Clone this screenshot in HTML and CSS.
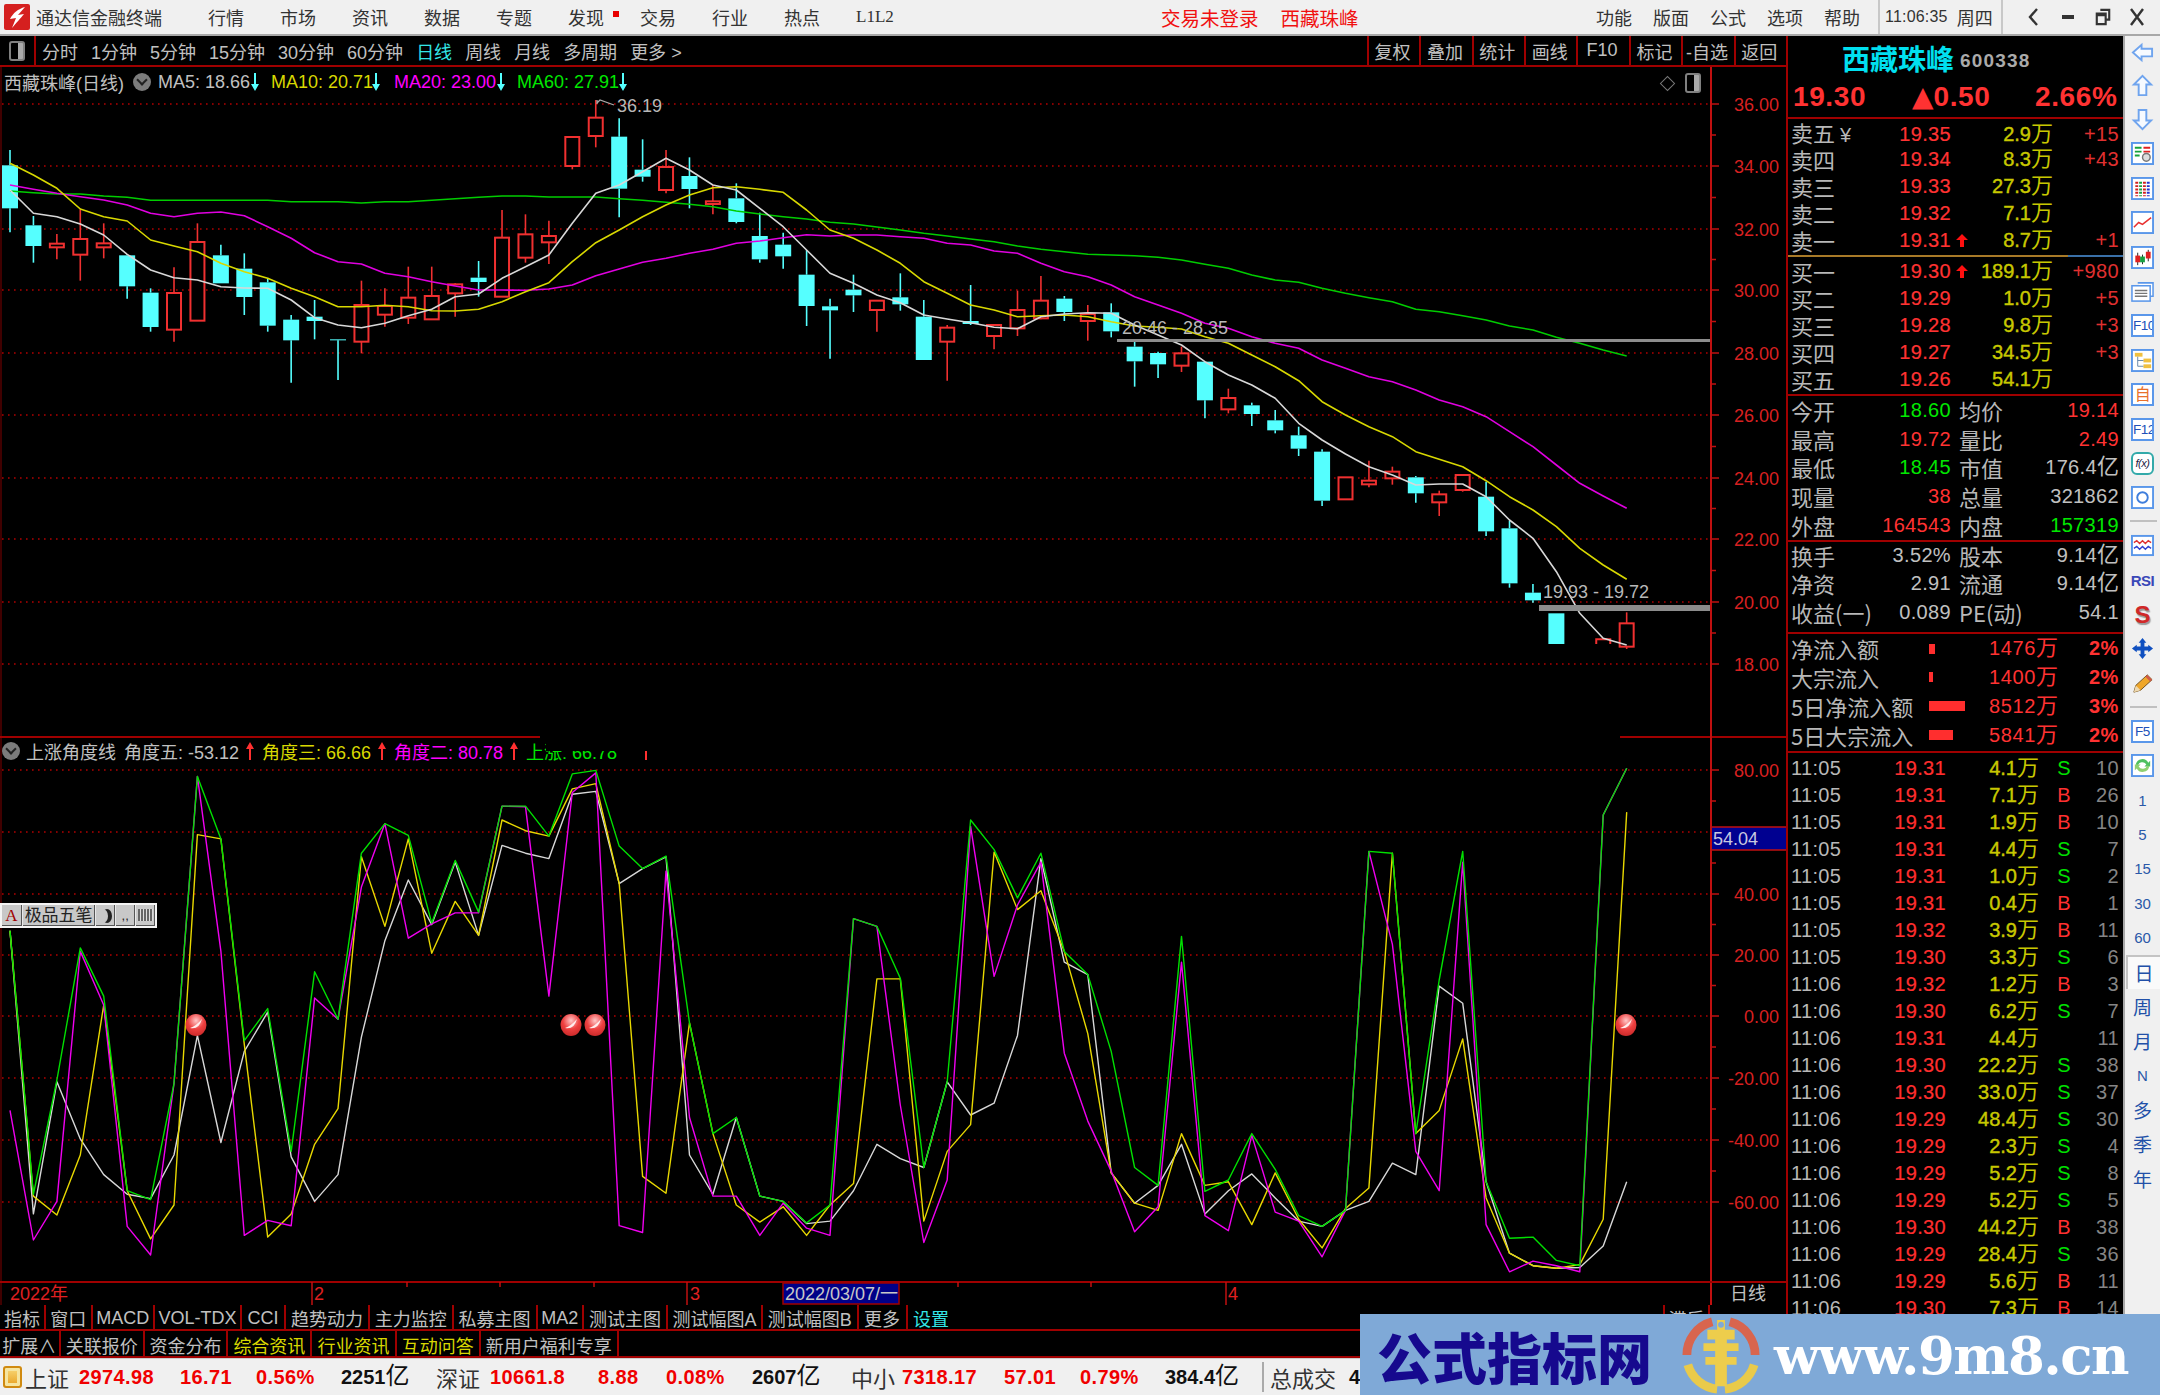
FILE: index.html
```html
<!DOCTYPE html>
<html lang="zh-CN">
<head>
<meta charset="utf-8">
<title>通达信金融终端</title>
<link rel="stylesheet" href="styles.css">
</head>
<body>
<div class="app">
  <header class="titlebar">
    <svg class="logo" viewBox="0 0 26 26"><rect width="26" height="26" rx="2" fill="#d5201f"/><path d="M21 3 C14 5 9 9 6 15 L12 14 L8 24 C13 18 16 15 20 10 L14 11 Z" fill="#fff"/></svg>
    <div class="brand">通达信金融终端</div>
    <nav class="menu">
      <span>行情</span><span>市场</span><span>资讯</span><span>数据</span><span>专题</span><span class="dotted">发现</span><span>交易</span><span>行业</span><span>热点</span><span class="l1">L1L2</span>
    </nav>
    <div class="alerts"><span>交易未登录</span><span>西藏珠峰</span></div>
    <nav class="funcs"><span>功能</span><span>版面</span><span>公式</span><span>选项</span><span>帮助</span></nav>
    <div class="clock"><span class="clock-t">11:06:35</span><span>周四</span></div>
    <div class="winbtns">
      <svg viewBox="0 0 16 20"><path d="M11 2 L4 10 L11 18" fill="none" stroke="#333" stroke-width="2.4"/></svg>
      <svg viewBox="0 0 16 20"><rect x="2" y="8" width="12" height="4" fill="#333"/></svg>
      <svg viewBox="0 0 18 20"><path d="M6 2 H16 V13 H13 M2 6 H12 V18 H2 Z M2 8 H12" fill="none" stroke="#333" stroke-width="2.4"/></svg>
      <svg viewBox="0 0 16 20"><path d="M2 2 L14 18 M14 2 L2 18" stroke="#333" stroke-width="2.4"/></svg>
    </div>
  </header>

  <div class="main">
    <section class="left">
      <div class="toolbar">
        <div class="tb-icon"><i class="pane-ico"></i></div>
        <div class="periods">
          <span>分时</span><span>1分钟</span><span>5分钟</span><span>15分钟</span><span>30分钟</span><span>60分钟</span><span class="cy">日线</span><span>周线</span><span>月线</span><span>多周期</span><span>更多 &gt;</span>
        </div>
        <div class="tools">
          <span>复权</span><span>叠加</span><span>统计</span><span>画线</span><span>F10</span><span>标记</span><span>-自选</span><span>返回</span>
        </div>
      </div>

      <div class="chart-wrap">
        <svg id="chart" class="chart" viewBox="0 67 1786 1238" width="1786" height="1238"></svg>

        <div class="legend lg-main">
          <span class="gr">西藏珠峰(日线)</span>
          <i class="chev"></i>
          <span class="gr">MA5: 18.66</span><i class="ar-down"></i>
          <span class="ye">MA10: 20.71</span><i class="ar-down"></i>
          <span class="ma">MA20: 23.00</span><i class="ar-down"></i>
          <span class="gn">MA60: 27.91</span><i class="ar-down"></i>
        </div>
        <div class="chart-tools"><i class="diamond"></i><i class="pane-ico"></i></div>

        <div class="legend lg-sub">
          <i class="chev"></i>
          <span class="gr">上涨角度线</span>
          <span class="gr">角度五: -53.12</span><i class="ar-up"></i>
          <span class="ye">角度三: 66.66</span><i class="ar-up"></i>
          <span class="ma">角度二: 80.78</span><i class="ar-up"></i>
          <span class="gn">上涨: 66.78</span><i class="ar-up"></i>
        </div>
        <div class="legend-mask"></div>

        <div class="ime">
          <span class="ime-a">A</span><span class="ime-name">极品五笔</span><span class="ime-b"><i class="moon"></i></span><span class="ime-b">,,</span>
          <span class="ime-b"><i class="kbd"></i></span>
        </div>
      </div>

      <div class="tabs tabs-a">
        <span>指标</span><span>窗口</span><span>MACD</span><span>VOL-TDX</span><span>CCI</span><span>趋势动力</span><span>主力监控</span><span>私募主图</span><span>MA2</span><span>测试主图</span><span>测试幅图A</span><span>测试幅图B</span><span>更多</span><span class="cy">设置</span>
        <span class="lag">滞后</span><span class="lag2"></span>
      </div>
      <div class="tabs tabs-b">
        <span>扩展∧</span><span>关联报价</span><span>资金分布</span><span class="ye">综合资讯</span><span class="ye">行业资讯</span><span class="ye">互动问答</span><span>新用户福利专享</span>
      </div>
    </section>

    <aside class="side">
      <div class="s-head">
        <div class="s-name"><b>西藏珠峰</b><span>600338</span></div>
        <div class="s-price"><span>19.30</span><span><em>▲</em>0.50</span><span>2.66%</span></div>
      </div>

      <div class="book sell">
        <div class="b-row"><span class="lb">卖五<em>¥</em></span><span class="pr">19.35</span><span></span><span class="vol">2.9<u>万</u></span><span class="dl">+15</span></div>
        <div class="b-row"><span class="lb">卖四</span><span class="pr">19.34</span><span></span><span class="vol">8.3<u>万</u></span><span class="dl">+43</span></div>
        <div class="b-row"><span class="lb">卖三</span><span class="pr">19.33</span><span></span><span class="vol">27.3<u>万</u></span><span class="dl"></span></div>
        <div class="b-row"><span class="lb">卖二</span><span class="pr">19.32</span><span></span><span class="vol">7.1<u>万</u></span><span class="dl"></span></div>
        <div class="b-row"><span class="lb">卖一</span><span class="pr">19.31</span><span><i class="up"></i></span><span class="vol">8.7<u>万</u></span><span class="dl">+1</span></div>
      </div>
      <div class="book-sep"><i></i></div>
      <div class="book buy">
        <div class="b-row"><span class="lb">买一</span><span class="pr">19.30</span><span><i class="up"></i></span><span class="vol">189.1<u>万</u></span><span class="dl">+980</span></div>
        <div class="b-row"><span class="lb">买二</span><span class="pr">19.29</span><span></span><span class="vol">1.0<u>万</u></span><span class="dl">+5</span></div>
        <div class="b-row"><span class="lb">买三</span><span class="pr">19.28</span><span></span><span class="vol">9.8<u>万</u></span><span class="dl">+3</span></div>
        <div class="b-row"><span class="lb">买四</span><span class="pr">19.27</span><span></span><span class="vol">34.5<u>万</u></span><span class="dl">+3</span></div>
        <div class="b-row"><span class="lb">买五</span><span class="pr">19.26</span><span></span><span class="vol">54.1<u>万</u></span><span class="dl"></span></div>
      </div>

      <div class="stats st-a">
        <div class="st-row"><span class="lb">今开</span><span class="val gn">18.60</span><span class="lb l2">均价</span><span class="val re">19.14</span></div>
        <div class="st-row"><span class="lb">最高</span><span class="val re">19.72</span><span class="lb l2">量比</span><span class="val re">2.49</span></div>
        <div class="st-row"><span class="lb">最低</span><span class="val gn">18.45</span><span class="lb l2">市值</span><span class="val gr">176.4<u>亿</u></span></div>
        <div class="st-row"><span class="lb">现量</span><span class="val re">38</span><span class="lb l2">总量</span><span class="val gr">321862</span></div>
        <div class="st-row"><span class="lb">外盘</span><span class="val re">164543</span><span class="lb l2">内盘</span><span class="val gn">157319</span></div>
      </div>
      <div class="stats st-b">
        <div class="st-row"><span class="lb">换手</span><span class="val gr">3.52%</span><span class="lb l2">股本</span><span class="val gr">9.14<u>亿</u></span></div>
        <div class="st-row"><span class="lb">净资</span><span class="val gr">2.91</span><span class="lb l2">流通</span><span class="val gr">9.14<u>亿</u></span></div>
        <div class="st-row"><span class="lb">收益(一)</span><span class="val gr">0.089</span><span class="lb l2">PE(动)</span><span class="val gr">54.1</span></div>
      </div>
      <div class="flows">
        <div class="fl-row"><span class="lb">净流入额</span><span><i class="bar" style="width:6px"></i></span><span class="re">1476<u>万</u></span><span class="re pct">2%</span></div>
        <div class="fl-row"><span class="lb">大宗流入</span><span><i class="bar" style="width:4px"></i></span><span class="re">1400<u>万</u></span><span class="re pct">2%</span></div>
        <div class="fl-row"><span class="lb">5日净流入额</span><span><i class="bar" style="width:36px"></i></span><span class="re">8512<u>万</u></span><span class="re pct">3%</span></div>
        <div class="fl-row"><span class="lb">5日大宗流入</span><span><i class="bar" style="width:24px"></i></span><span class="re">5841<u>万</u></span><span class="re pct">2%</span></div>
      </div>

      <div class="ticks">
        <div class="t-row"><span>11:05</span><span>19.31</span><span>4.1<u>万</u></span><span class="s">S</span><span>10</span></div>
        <div class="t-row"><span>11:05</span><span>19.31</span><span>7.1<u>万</u></span><span class="b">B</span><span>26</span></div>
        <div class="t-row"><span>11:05</span><span>19.31</span><span>1.9<u>万</u></span><span class="b">B</span><span>10</span></div>
        <div class="t-row"><span>11:05</span><span>19.31</span><span>4.4<u>万</u></span><span class="s">S</span><span>7</span></div>
        <div class="t-row"><span>11:05</span><span>19.31</span><span>1.0<u>万</u></span><span class="s">S</span><span>2</span></div>
        <div class="t-row"><span>11:05</span><span>19.31</span><span>0.4<u>万</u></span><span class="b">B</span><span>1</span></div>
        <div class="t-row"><span>11:05</span><span>19.32</span><span>3.9<u>万</u></span><span class="b">B</span><span>11</span></div>
        <div class="t-row"><span>11:05</span><span>19.30</span><span>3.3<u>万</u></span><span class="s">S</span><span>6</span></div>
        <div class="t-row"><span>11:06</span><span>19.32</span><span>1.2<u>万</u></span><span class="b">B</span><span>3</span></div>
        <div class="t-row"><span>11:06</span><span>19.30</span><span>6.2<u>万</u></span><span class="s">S</span><span>7</span></div>
        <div class="t-row"><span>11:06</span><span>19.31</span><span>4.4<u>万</u></span><span class="s"></span><span>11</span></div>
        <div class="t-row"><span>11:06</span><span>19.30</span><span>22.2<u>万</u></span><span class="s">S</span><span>38</span></div>
        <div class="t-row"><span>11:06</span><span>19.30</span><span>33.0<u>万</u></span><span class="s">S</span><span>37</span></div>
        <div class="t-row"><span>11:06</span><span>19.29</span><span>48.4<u>万</u></span><span class="s">S</span><span>30</span></div>
        <div class="t-row"><span>11:06</span><span>19.29</span><span>2.3<u>万</u></span><span class="s">S</span><span>4</span></div>
        <div class="t-row"><span>11:06</span><span>19.29</span><span>5.2<u>万</u></span><span class="s">S</span><span>8</span></div>
        <div class="t-row"><span>11:06</span><span>19.29</span><span>5.2<u>万</u></span><span class="s">S</span><span>5</span></div>
        <div class="t-row"><span>11:06</span><span>19.30</span><span>44.2<u>万</u></span><span class="b">B</span><span>38</span></div>
        <div class="t-row"><span>11:06</span><span>19.29</span><span>28.4<u>万</u></span><span class="s">S</span><span>36</span></div>
        <div class="t-row"><span>11:06</span><span>19.29</span><span>5.6<u>万</u></span><span class="b">B</span><span>11</span></div>
        <div class="t-row"><span>11:06</span><span>19.30</span><span>7.3<u>万</u></span><span class="b">B</span><span>14</span></div>
      </div>
    </aside>

    <aside class="rail">
      <div class="ri first"><svg viewBox="0 0 24 20"><path d="M2 10 L11 2 V6 H22 V14 H11 V18 Z" fill="#f6faff" stroke="#6fa4ee" stroke-width="2"/></svg></div>
      <div class="ri"><svg viewBox="0 0 24 24"><path d="M12 2 L21 11 H16 V22 H8 V11 H3 Z" fill="#f6faff" stroke="#6fa4ee" stroke-width="2"/></svg></div>
      <div class="ri"><svg viewBox="0 0 24 24"><path d="M12 22 L21 13 H16 V2 H8 V13 H3 Z" fill="#f6faff" stroke="#6fa4ee" stroke-width="2"/></svg></div>
      <div class="ri"><svg viewBox="0 0 24 24"><rect x="1" y="1" width="22" height="22" fill="#fff" stroke="#5a97ea" stroke-width="2"/><path d="M4 6 H11 M4 10 H11 M4 14 H9" stroke="#17a23a" stroke-width="2"/><path d="M13 6 H20 M13 10 H20" stroke="#e02020" stroke-width="2"/><circle cx="16" cy="16" r="4" fill="#ddd" stroke="#777" stroke-width="1.5"/></svg></div>
      <div class="ri"><svg viewBox="0 0 24 24"><rect x="1" y="1" width="22" height="22" fill="#fff" stroke="#5a97ea" stroke-width="2"/><path d="M6 5 V20" stroke="#d02020" stroke-width="3" stroke-dasharray="2 1.5"/><path d="M10 5 V20" stroke="#18a040" stroke-width="3" stroke-dasharray="2 1.5"/><path d="M14 5 V20" stroke="#d02020" stroke-width="3" stroke-dasharray="2 1.5"/><path d="M18 5 V20" stroke="#2030d0" stroke-width="3" stroke-dasharray="2 1.5"/></svg></div>
      <div class="ri"><svg viewBox="0 0 24 24"><rect x="1" y="1" width="22" height="22" fill="#fff" stroke="#5a97ea" stroke-width="2"/><path d="M3 17 L8 12 L12 14 L17 10 L21 7" fill="none" stroke="#e83030" stroke-width="1.6"/></svg></div>
      <div class="ri"><svg viewBox="0 0 24 24"><rect x="1" y="1" width="22" height="22" fill="#fff" stroke="#5a97ea" stroke-width="2"/><path d="M7 7 V20 M12 9 V19 M18 4 V16" stroke="#222" stroke-width="1"/><rect x="4.5" y="10" width="5" height="7" fill="#e02020"/><rect x="9.5" y="11" width="5" height="6" fill="#18a040"/><rect x="15.5" y="6" width="5" height="7" fill="#e02020"/></svg></div>
      <div class="ri"><svg viewBox="0 0 24 24"><path d="M7 3 H23 V17 H20" fill="#fff" stroke="#5a97ea" stroke-width="1.6"/><rect x="1" y="6" width="19" height="16" fill="#fff" stroke="#5a97ea" stroke-width="1.6"/><path d="M4 11 H17 M4 14 H17 M4 17 H17" stroke="#777" stroke-width="1.4"/></svg></div>
      <div class="ri"><span class="fbox">F10</span></div>
      <div class="ri"><svg viewBox="0 0 24 24"><rect x="1" y="1" width="22" height="22" fill="#fff" stroke="#5a97ea" stroke-width="2"/><rect x="4" y="4" width="8" height="4" fill="#f0c040"/><rect x="13" y="10" width="8" height="4" fill="#f0c040"/><rect x="13" y="16" width="8" height="4" fill="#f0c040"/><path d="M7 8 V18 H13 M7 12 H13" fill="none" stroke="#68a" stroke-width="1"/></svg></div>
      <div class="ri"><span class="fbox zi">自</span></div>
      <div class="ri"><span class="fbox">F12</span></div>
      <div class="ri"><span class="fbox fx">f(x)</span></div>
      <div class="ri"><svg viewBox="0 0 24 24"><rect x="1" y="1" width="22" height="22" fill="#fff" stroke="#5a97ea" stroke-width="2"/><circle cx="12" cy="12" r="5.5" fill="none" stroke="#3f7edc" stroke-width="2"/></svg></div>
      <div class="r-sep"></div>
      <div class="ri"><svg viewBox="0 0 24 24"><rect x="1" y="2" width="22" height="20" fill="#fff" stroke="#5a97ea" stroke-width="2"/><path d="M3 9 L6 7 L9 10 L12 7 L15 10 L18 7 L21 9" fill="none" stroke="#e03030" stroke-width="1.4"/><path d="M3 15 L6 13 L9 16 L12 13 L15 16 L18 13 L21 15" fill="none" stroke="#3040d0" stroke-width="1.4"/></svg></div>
      <div class="ri"><span class="rsi">RSI</span></div>
      <div class="ri"><span class="sico">S</span></div>
      <div class="ri"><svg viewBox="0 0 24 24"><path d="M12 1 L16 6 H14 V10 H18 V8 L23 12 L18 16 V14 H14 V18 H16 L12 23 L8 18 H10 V14 H6 V16 L1 12 L6 8 V10 H10 V6 H8 Z" fill="#1050c0"/></svg></div>
      <div class="ri"><svg viewBox="0 0 24 24"><path d="M3 21 L5 14 L17 3 L22 8 L10 19 Z" fill="#efa72a" stroke="#705020" stroke-width="1"/><path d="M17 3 L22 8 L20 10 L15 5 Z" fill="#d05a4a"/><path d="M3 21 L5 14 L10 19 Z" fill="#eed9b0"/></svg></div>
      <div class="r-sep"></div>
      <div class="ri"><span class="fbox">F5</span></div>
      <div class="ri"><svg viewBox="0 0 24 24"><rect x="1" y="1" width="22" height="22" fill="#fff" stroke="#5a97ea" stroke-width="2"/><path d="M5 11 A7 7 0 0 1 18 9 L20 7 V13 H14 L16 11 A5 5 0 0 0 7 12 Z" fill="#4fc060"/><path d="M19 13 A7 7 0 0 1 6 15 L4 17 V11 H10 L8 13 A5 5 0 0 0 17 12 Z" fill="#8fd070"/></svg></div>
      <div class="ri num">1</div>
      <div class="ri num">5</div>
      <div class="ri num">15</div>
      <div class="ri num">30</div>
      <div class="ri num">60</div>
      <div class="ri day on">日</div>
      <div class="ri day">周</div>
      <div class="ri day">月</div>
      <div class="ri num">N</div>
      <div class="ri day">多</div>
      <div class="ri day">季</div>
      <div class="ri day">年</div>
    </aside>
  </div>

  <footer class="footer">
    <i class="f-ico"></i>
    <span class="f-l">上证</span><span class="f-v">2974.98</span><span class="f-v">16.71</span><span class="f-v">0.56%</span><span class="f-k">2251<u>亿</u></span>
    <span class="f-l">深证</span><span class="f-v">10661.8</span><span class="f-v">8.88</span><span class="f-v">0.08%</span><span class="f-k">2607<u>亿</u></span>
    <span class="f-l">中小</span><span class="f-v">7318.17</span><span class="f-v">57.01</span><span class="f-v">0.79%</span><span class="f-k">384.4<u>亿</u></span>
    <i class="f-sep"></i><span class="f-l">总成交</span><span class="f-k">4</span>
  </footer>

  <div class="watermark">
    <span class="wm-cn">公式指标网</span>
    <svg class="wm-logo" viewBox="0 0 80 80">
      <path d="M5 40 A35 35 0 0 1 31 6" fill="none" stroke="#d8654e" stroke-width="9"/>
      <path d="M49 6 A35 35 0 0 1 75 40" fill="none" stroke="#d8654e" stroke-width="9"/>
      <path d="M6 50 A35 35 0 0 0 36 75" fill="none" stroke="#e9ca4a" stroke-width="9"/>
      <path d="M74 50 A35 35 0 0 1 44 75" fill="none" stroke="#e9ca4a" stroke-width="9"/>
      <path d="M36 4 H44 V14 H54 V24 H46 V28 H58 V36 H46 V42 H56 V50 H46 V72 H34 V50 H24 V42 H34 V36 H22 V28 H34 V24 H26 V14 H36 Z" fill="#edcd4c"/>
      <circle cx="40" cy="9" r="3" fill="#7fa9d7"/>
    </svg>
    <span class="wm-url">www.9m8.cn</span>
  </div>
</div>
<script src="chart.js"></script>
</body>
</html>
```

FILE: styles.css
```css
* { box-sizing: border-box; }
html, body { margin: 0; padding: 0; background: #000; }
body {
  width: 2160px; height: 1395px; overflow: hidden;
  font-family: "Liberation Sans", "Noto Sans CJK SC", sans-serif;
  font-size: 18px; color: #c0c0c0;
}
i { display: block; font-style: normal; }
u { text-decoration: none; font-size: 22px; line-height: 0; }
.app { position: relative; width: 2160px; height: 1395px; display: flex; flex-direction: column; }
.gr { color: #c0c0c0; } .ye { color: #d8d800; } .ma { color: #ff00ff; } .gn { color: #00e800; }
.re { color: #ff3232; } .cy { color: #33e6e6; }

/* title bar */
.titlebar { height: 36px; flex: none; background: #f0f0f0; border-bottom: 2px solid #a8a8a8; display: flex; align-items: center; color: #333; }
.logo { width: 26px; height: 26px; margin-left: 4px; flex: none; }
.brand { width: 172px; margin-left: 6px; font-size: 18px; }
.menu { width: 953px; display: flex; gap: 36px; }
.menu span { width: 36px; white-space: nowrap; }
.menu .dotted { position: relative; }
.menu .dotted::after { content: ""; position: absolute; left: 45px; top: 7px; width: 6px; height: 6px; background: #e80000; }
.menu .l1 { font-size: 17px; font-family: "Liberation Serif", serif; padding-top: 3px; }
.alerts { width: 435px; display: flex; gap: 22px; color: #f01010; font-size: 19.5px; }
.funcs { width: 282px; display: flex; gap: 21px; }
.funcs span { width: 36px; }
.clock { width: 125px; height: 34px; display: flex; align-items: center; gap: 9px; border-left: 2px solid #c8c8c8; border-right: 2px solid #c8c8c8; padding-left: 5px; }
.clock-t { font-size: 16px; letter-spacing: .2px; }
.winbtns { flex: 1; display: flex; align-items: center; justify-content: space-around; padding: 0 6px 0 14px; }
.winbtns svg { width: 16px; height: 20px; }

/* main */
.main { height: 1322px; flex: none; display: flex; }
.left { width: 1786px; flex: none; display: flex; flex-direction: column; }

.toolbar { height: 31px; flex: none; display: flex; align-items: stretch; border-bottom: 2px solid #a00000; }
.tb-icon { width: 36px; border-right: 2px solid #a00000; display: flex; align-items: center; justify-content: center; }
.pane-ico { width: 16px; height: 20px; border: 2px solid #808080; border-radius: 3px; background: linear-gradient(90deg, #000 55%, #aaa 55%); }
.periods { display: flex; gap: 13px; align-items: center; padding-left: 6px; white-space: nowrap; }
.tools { margin-left: auto; display: flex; }
.tools span { width: 52.4px; display: flex; align-items: center; justify-content: center; border-left: 2px solid #a00000; white-space: nowrap; padding-right: 3px; }

.chart-wrap { position: relative; height: 1238px; flex: none; }
.chart { display: block; }
.legend { position: absolute; display: grid; align-items: center; white-space: nowrap; }
.lg-main { left: 4px; top: 2px; height: 22px; grid-template-columns: 129px 25px 93px 20px 101px 22px 103px 20px 102px 8px; }
.lg-sub { left: 2px; top: 671px; height: 22px; grid-template-columns: 24px 98px 122px 16px 116px 16px 116px 16px 116px 8px; }
.legend-mask { position: absolute; left: 546px; top: 668px; width: 110px; height: 16px; background: #000; }
.chev { width: 18px; height: 18px; border-radius: 50%; background: #7c7c7c; position: relative; }
.chev::after { content: ""; position: absolute; left: 5px; top: 3px; width: 6px; height: 6px; border-right: 2px solid #222; border-bottom: 2px solid #222; transform: rotate(45deg); }
.ar-down { width: 8px; height: 18px; background: #55ffff; clip-path: polygon(3px 0, 5px 0, 5px 11px, 8px 11px, 4px 18px, 0 11px, 3px 11px); }
.ar-up { width: 8px; height: 18px; background: #ff3030; clip-path: polygon(4px 0, 8px 7px, 5px 7px, 5px 18px, 3px 18px, 3px 7px, 0 7px); }
.chart-tools { position: absolute; left: 1662px; top: 6px; display: flex; gap: 12px; align-items: center; }
.diamond { width: 11px; height: 11px; border: 1px solid #777; transform: rotate(45deg); }
.ime { position: absolute; left: 0; top: 836px; width: 157px; height: 25px; display: flex; gap: 1px; background: #e8e8e8; border: 2px solid #f4f4f4; color: #222; font-size: 17px; line-height: 21px; }
.ime span { background: #c8c8c8; text-align: center; border-right: 1px solid #555; border-bottom: 1px solid #555; overflow: hidden; }
.ime-a { width: 20px; color: #a00000; font-family: "Liberation Serif", serif; }
.ime-name { width: 73px; }
.ime-b { width: 19px; font-size: 13px; }
.moon { width: 10px; height: 14px; margin: 4px 0 0 2px; border-radius: 50%; box-shadow: 4px 0 0 0 #222; }
.kbd { width: 15px; height: 12px; margin: 4px auto 0; background: repeating-linear-gradient(90deg, #666 0 2px, #ddd 2px 3px); }

.tabs { flex: none; display: flex; border-bottom: 2px solid #a00000; white-space: nowrap; }
.tabs span { display: flex; align-items: center; justify-content: center; border-right: 2px solid #a00000; padding-top: 2px; }
.tabs-a { height: 26px; font-size: 18px; }
.tabs-b { height: 27px; font-size: 18px; }
.tabs-a span:nth-child(1) { width: 46px; } .tabs-a span:nth-child(2) { width: 46.5px; }
.tabs-a span:nth-child(3) { width: 62.5px; } .tabs-a span:nth-child(4) { width: 87px; }
.tabs-a span:nth-child(5) { width: 44px; } .tabs-a span:nth-child(6) { width: 84px; }
.tabs-a span:nth-child(7) { width: 83.5px; } .tabs-a span:nth-child(8) { width: 84px; }
.tabs-a span:nth-child(9) { width: 46.5px; } .tabs-a span:nth-child(10) { width: 84px; }
.tabs-a span:nth-child(11) { width: 95px; } .tabs-a span:nth-child(12) { width: 95.5px; }
.tabs-a span:nth-child(13) { width: 49px; } .tabs-a span:nth-child(14) { width: 47px; border-right: 0; }
.tabs-a .lag { width: 47px; margin-left: auto; margin-right: 0; border-left: 2px solid #a00000; }
.tabs-a .lag2 { width: 76px; border-right: 0; }
.tabs-b span:nth-child(1) { width: 60.6px; } .tabs-b span:nth-child(2) { width: 84.2px; }
.tabs-b span:nth-child(3) { width: 83.5px; } .tabs-b span:nth-child(4) { width: 84.2px; }
.tabs-b span:nth-child(5) { width: 84.2px; } .tabs-b span:nth-child(6) { width: 84.2px; }
.tabs-b span:nth-child(7) { width: 137.7px; }

/* side panel */
.side { width: 339px; flex: none; border-left: 2px solid #a00000; border-right: 2px solid #a8a8a8; overflow: hidden; font-size: 20px; letter-spacing: .35px; }
.side u { font-size: 22px; letter-spacing: 0; font-weight: normal; }
.s-head { height: 83px; border-bottom: 2px solid #a00000; }
.s-name { height: 44px; padding: 0 0 0 54px; display: flex; align-items: center; gap: 6px; }
.s-name b { font-family: "Noto Sans CJK SC", sans-serif; font-size: 28px; color: #00e0f0; letter-spacing: 0; line-height: 36px; }
.s-name span { font-size: 19px; font-weight: bold; color: #aaa; letter-spacing: 1.2px; padding-top: 6px; }
.s-price { display: grid; grid-template-columns: 119px 123px 82px; padding-left: 5px; font-size: 28px; font-weight: bold; color: #ff3232; line-height: 34px; letter-spacing: .6px; }
.s-price em { font-style: normal; font-family: "DejaVu Sans", sans-serif; letter-spacing: 0; }
.book { padding-left: 3px; }
.b-row { height: 27px; display: grid; grid-template-columns: 70px 90px 18px 84px 66px; align-items: center; line-height: 27px; }
.lb { font-family: "Noto Sans CJK SC", sans-serif; font-size: 22px; letter-spacing: 0; color: #b8b8b8; white-space: nowrap; line-height: 27px; }
.lb em { font-style: normal; margin-left: 5px; font-family: "Liberation Sans", sans-serif; font-size: 20px; }
.pr { text-align: right; color: #ff3232; -webkit-text-stroke: .2px #ff3232; }
.vol { text-align: right; color: #c8c800; letter-spacing: 0; white-space: nowrap; -webkit-text-stroke: .4px #c8c800; }
.vol u { -webkit-text-stroke: 0; }
.dl { text-align: right; color: #e03030; }
.up { width: 12px; height: 13px; margin-left: 5px; background: #ff1010; clip-path: polygon(6px 0, 12px 6px, 8px 6px, 8px 13px, 4px 13px, 4px 6px, 0 6px); }
.book-sep { height: 4px; padding-top: 1px; }
.book-sep i { height: 2px; background: linear-gradient(90deg, #a87a28 0 280px, #3a70a8 280px); }
.buy { border-bottom: 2px solid #a00000; padding-bottom: 1px; }
.stats { padding-left: 3px; border-bottom: 2px solid #a00000; }
.st-row { display: grid; grid-template-columns: 70px 90px 8px 60px 100px; align-items: center; line-height: 27px; }
.st-row .l2 { grid-column: 4; }
.st-row .val { text-align: right; white-space: nowrap; }
.st-row .val:nth-child(2) { grid-column: 2; }
.st-row .val:last-child { grid-column: 5; }
.st-a .st-row { height: 28.75px; }
.st-b .st-row { height: 28.5px; }
.st-b { padding-bottom: 6px; }
.st-b .st-row:first-child { margin-top: -1px; }
.flows { padding-left: 3px; border-bottom: 2px solid #a00000; padding-bottom: 1.5px; }
.fl-row { height: 28.8px; display: grid; grid-template-columns: 138px 60px 68px 62px; align-items: center; line-height: 27px; letter-spacing: .6px; }
.fl-row span:nth-child(3), .fl-row span:nth-child(4) { text-align: right; white-space: nowrap; }
.pct { font-weight: bold; }
.bar { height: 10px; background: #ff2e2e; }
.ticks { padding-left: 3px; padding-top: 2px; }
.t-row { height: 27px; display: grid; grid-template-columns: 69px 86px 93px 50px 30px; align-items: center; line-height: 27px; white-space: nowrap; }
.t-row span:nth-child(1) { color: #b8b8b8; }
.t-row span:nth-child(2) { color: #ff2e2e; text-align: right; -webkit-text-stroke: .2px #ff2e2e; }
.t-row span:nth-child(3) { color: #c8c800; text-align: right; letter-spacing: 0; -webkit-text-stroke: .4px #c8c800; }
.t-row span:nth-child(3) u { -webkit-text-stroke: 0; }
.t-row span:nth-child(4) { text-align: center; }
.t-row span:nth-child(5) { color: #858585; text-align: right; }
.t-row .s { color: #00e000; } .t-row .b { color: #ff3030; }

/* right rail */
.rail { flex: 1; background: #f0f0f0; display: flex; flex-direction: column; align-items: stretch; }
.ri { height: 34.4px; flex: none; display: flex; align-items: center; justify-content: center; }
.ri.first { height: 32px; }
.ri svg { width: 23px; height: 23px; }
.r-sep { height: 13.5px; flex: none; position: relative; }
.r-sep::after { content: ""; position: absolute; left: 5px; right: 3px; top: 5px; height: 2px; background: #c0c0c0; }
.fbox { width: 23px; height: 23px; border: 2px solid #5a97ea; background: #fff; color: #2050b8; font-size: 13.5px; letter-spacing: -.5px; line-height: 19px; text-align: center; overflow: hidden; }
.zi { color: #e8702a; font-size: 16px; }
.fx { border-radius: 6px; border-color: #3aa; font-size: 11px; font-style: italic; color: #224; }
.rsi { font-size: 15px; font-weight: bold; color: #3a48b8; letter-spacing: -.5px; }
.sico { font-size: 24px; font-weight: bold; color: #d02828; text-shadow: 1px 2px 1px #999; line-height: 24px; }
.num { color: #2a58a8; font-size: 15px; }
.day { color: #2250a8; font-size: 19px; }
.day.on { background: #fafafa; border-top: 2px solid #c4c4c4; border-left: 2px solid #c4c4c4; margin-left: 1px; }

/* footer */
.footer { height: 37px; flex: none; background: #f0f0f0; border-top: 1px solid #ccc; display: grid; grid-template-columns: 25px 54px 101px 76px 85px 95px 54px 108px 68px 86px 99px 51px 102px 76px 85px 97px 8px 79px 30px; align-items: center; color: #222; white-space: nowrap; }
.f-ico { width: 19px; height: 22px; margin-left: 3px; border-radius: 3px; background: linear-gradient(#f8d878, #e8a020); border: 2px solid #d08a10; box-shadow: inset 0 0 0 3px #f6e5a0; }
.f-l { font-size: 22px; color: #333; font-family: "Noto Sans CJK SC", sans-serif; line-height: 36px; }
.f-v { font-size: 20px; font-weight: bold; color: #f00000; letter-spacing: .4px; }
.f-k { font-size: 20px; font-weight: bold; color: #111; }
.f-k u { font-weight: normal; font-size: 24px; }
.f-sep { width: 2px; height: 30px; background: #aaa; }

/* watermark */
.watermark { position: absolute; left: 1360px; top: 1314px; width: 800px; height: 81px; background: #7fa9d7; display: flex; align-items: center; }
.wm-cn { margin-left: 17px; width: 305px; font-family: "Noto Sans CJK SC", sans-serif; font-weight: 900; font-size: 55px; color: #16098e; letter-spacing: 0; white-space: nowrap; line-height: 70px; }
.wm-logo { width: 78px; height: 78px; flex: none; }
.wm-url { margin-left: 14px; font-family: "DejaVu Serif", serif; font-weight: bold; font-size: 53px; color: #fff; letter-spacing: -1.5px; white-space: nowrap; line-height: 60px; }
```

FILE: chart.js
```js
// Daily candles and indicators, in page pixels.
const stepX = 23.43, X = i => 10 + stepX * i;
const top8 = v => 70 + v / 3, top9 = v => 250 + v / 3, sub = v => 730 + v / 2.8;

// wick top, body top, body bottom, wick bottom, c = falling (cyan) / r = rising (red)
const c8 = [
[240,286,415,487,'c'],[438,466,528,578,'c'],[492,521,532,568,'r'],[418,507,554,632,'r'],[460,520,532,565,'r'],
[553,556,649,686,'c'],[655,668,771,785,'c'],[592,669,779,815,'r'],[460,516,752,752,'r'],[524,556,640,640,'c'],
[550,596,681,735,'c'],[625,637,767,785,'c'],[735,749,811,938,'c'],[690,740,753,808,'c'],[808,808,811,930,'c'],
[632,705,815,850,'r'],[655,708,734,770,'r'],[590,683,743,762,'r'],[590,678,748,750,'r'],[640,643,670,740,'r'],
[573,623,636,680,'c'],[420,503,680,680,'r'],[433,493,563,578,'r'],[452,498,517,582,'r'],[200,201,288,298,'r'],
[90,143,198,232,'r'],[145,200,356,442,'c'],[208,299,320,335,'c'],[240,291,360,370,'r'],[262,318,357,415,'c'],
[345,394,402,433,'r'],[340,385,456,460,'c'],[428,498,568,578,'c'],[488,524,559,596,'c'],[540,614,708,768,'c'],
[686,709,721,866,'c'],[614,659,676,726,'c']];
const c9 = [
[150,152,180,245,'r'],[70,142,163,182,'c'],[150,200,330,330,'c'],[225,233,275,392,'r'],[105,213,222,225,'c'],
[225,225,258,298,'r'],[122,180,235,258,'r'],[78,152,205,208,'r'],[138,146,186,213,'c'],[165,192,213,272,'r'],
[160,187,244,262,'c'],[275,290,334,410,'c'],[305,309,343,384,'c'],[290,310,347,366,'r'],[335,335,451,505,'c'],
[416,444,478,490,'r'],[458,466,492,528,'c'],[480,511,541,550,'c'],[530,556,596,618,'c'],[598,605,752,768,'c'],
[682,682,748,748,'r'],[632,692,703,712,'r'],[650,665,685,704,'r'],[678,682,730,758,'c'],[722,733,757,798,'r'],
[672,675,720,725,'r'],[695,740,844,858,'c'],[812,835,1000,1013,'c'],[1002,1028,1051,1058,'c'],[1090,1090,1182,1182,'c'],
null,[1168,1168,1182,1182,'o'],[1087,1120,1190,1197,'r']];

const ma = (a, b) => [...a.map(top8), ...b.map(top9)];
const MA = [
 ['#00cc00', ma([363,368,372,372,378,382,391,391,391,391,391,391,395,395,395,399,395,395,391,386,382,378,378,381,381,381,386,391,397,403,410,423,432,440,447,457,462],
   [-69,-60,-50,-42,-33,-25,-12,-2,5,13,15,17,22,30,43,55,75,90,97,115,130,143,155,178,185,197,210,228,240,262,280,300,318])],
 ['#e000e0', ma([345,358,370,380,390,405,430,440,430,426,437,470,505,548,575,582,610,620,635,648,660,660,661,657,645,617,597,577,565,550,538,520,513,503,494,498,495],
   [-45,-40,-35,-20,-15,3,10,40,65,80,105,140,165,190,220,235,260,280,295,330,355,380,395,420,450,470,500,545,590,645,700,738,775])],
 ['#d8d800', ma([280,315,355,417,440,453,510,528,545,580,605,625,655,680,710,710,706,710,722,723,718,695,665,638,575,518,480,440,405,375,353,350,358,367,420,480,505],
   [0,40,95,130,165,180,200,197,195,200,215,228,232,237,260,280,315,350,392,455,495,530,560,605,628,650,692,740,780,830,895,945,988])],
 ['#d8d8d8', ma([360,430,440,462,495,553,600,623,630,650,654,655,690,743,765,773,760,737,718,680,672,625,590,555,460,370,345,305,265,300,345,360,415,470,540,610,640],
   [135,158,195,207,218,232,236,200,192,188,190,225,255,285,335,375,405,445,520,570,612,650,675,705,702,702,740,810,865,965,1090,1165,1185])]
];

const s2 = (a, b) => [...a, ...b].map(sub);
const IND = [
 ['#d8d8d8', s2([562,1355,985,1145,1245,1300,1312,1190,855,1155,900,790,1195,1320,1245,860,590,420,545,370,575,323,345,360,180,172,430,388,355,1190,1300,1085,1305,1320,1382,1375,1290],
   [1160,1200,1225,985,1078,1045,855,360,650,685,1240,1325,1275,1160,1355,1290,1243,1310,1375,1390,1345,1320,1213,1245,717,765,1265,1465,1500,1507,1505,1445,1265])],
 ['#e8d800', s2([562,1305,1358,1190,770,1290,1425,1330,293,305,880,1420,1355,1160,1060,355,550,305,625,480,575,252,282,297,165,150,430,1250,1297,820,1130,1330,1378,1335,1415,1330,1270],
   [697,697,1375,1180,1105,342,503,450,620,850,1240,1325,1345,1130,1275,1265,1385,1240,1370,1450,1340,1282,345,1130,1065,865,1310,1465,1500,1507,1497,1370,230])],
 ['#f000f0', s2([1065,1428,1320,620,770,1390,1470,990,130,620,1415,1373,1388,750,810,440,262,583,543,512,512,213,215,745,175,120,1388,1407,395,1085,1305,1305,1415,1325,1395,1415,528],
   [550,1050,1435,1260,270,690,490,370,905,1095,1235,1405,1335,650,1360,1402,1135,1350,1375,1475,1345,340,600,1180,1290,370,1385,1517,1487,1500,1517,238,107])],
 ['#00e000', s2([562,1300,980,610,745,1290,1315,990,130,305,870,780,1180,677,810,345,262,295,540,365,510,213,213,297,123,113,325,388,353,820,1130,1085,1305,1320,1380,1330,528],
   [550,695,1225,985,252,335,470,345,620,685,900,1225,1275,578,1292,1260,1130,1230,1360,1390,1345,340,345,1130,700,340,1265,1423,1420,1485,1500,238,107])]
];

let g = '';
const RED = '#a00000', AX = '#c01010', LBL = '#d82020';
const line = (x1, y1, x2, y2, c, w, extra) => `<line x1="${x1}" y1="${y1}" x2="${x2}" y2="${y2}" stroke="${c}" stroke-width="${w}" ${extra || ''}/>`;
const dots = y => line(2, y, 1710, y, '#b00000', 1.6, 'stroke-dasharray="1.6 4.4"');
const label = (y, t) => `<text x="1779" y="${y + 6.5}" text-anchor="end" fill="${LBL}" font-size="18">${t}</text>`;
const tick = (y, l) => line(1711, y, 1711 + l, y, AX, 1.5);

// main pane grid + axis
const mainY = [[104,'36.00'],[166,'34.00'],[229,'32.00'],[290,'30.00'],[353,'28.00'],[415,'26.00'],[478,'24.00'],[539,'22.00'],[602,'20.00'],[664,'18.00']];
mainY.forEach(([y, t], i) => {
  g += dots(y) + tick(y, 8) + label(y, t);
  if (i < mainY.length - 1) g += tick((y + mainY[i + 1][0]) / 2, 5);
});
// sub pane grid + axis
const subY = [[770,'80.00'],[832,''],[894,'40.00'],[955,'20.00'],[1016,'0.00'],[1078,'-20.00'],[1140,'-40.00'],[1202,'-60.00']];
subY.forEach(([y, t], i) => {
  g += dots(y) + tick(y, 8) + (t ? label(y, t) : '');
  if (i < subY.length - 1) g += tick((y + subY[i + 1][0]) / 2, 5);
});
// frame
g += line(1, 67, 1, 1305, '#800000', 1);
g += line(0, 737, 540, 737, RED, 2) + line(1620, 737, 1786, 737, RED, 2);
g += line(1711, 67, 1711, 1305, AX, 2);
g += line(0, 1282, 1786, 1282, RED, 2);

// candles
const candle = (c, x) => {
  if (!c) return '';
  const [wt, bt, bb, wb, k] = c;
  const col = k === 'c' ? '#55ffff' : '#f03030';
  let s = '';
  if (k === 'o') {
    return `<path d="M${x - 7} ${bb} V${bt} H${x + 7} V${bb}" fill="none" stroke="${col}" stroke-width="2"/>`;
  }
  s += line(x, wt, x, bt, col, 1.6) + line(x, bb, x, wb, col, 1.6);
  if (k === 'c') s += `<rect x="${x - 8}" y="${bt}" width="16" height="${bb - bt}" fill="${col}"/>`;
  else s += `<rect x="${x - 7}" y="${bt}" width="14" height="${bb - bt}" fill="#000" stroke="${col}" stroke-width="2"/>`;
  return s;
};
c8.forEach((c, i) => { g += candle(c && [top8(c[0]), top8(c[1]), top8(c[2]), top8(c[3]), c[4]], X(i)); });
c9.forEach((c, i) => { g += candle(c && [top9(c[0]), top9(c[1]), top9(c[2]), top9(c[3]), c[4]], X(i + 37)); });

const poly = (ys, c, w) => `<polyline fill="none" stroke="${c}" stroke-width="${w}" stroke-linejoin="round" points="${ys.map((y, i) => X(i).toFixed(1) + ',' + y.toFixed(1)).join(' ')}"/>`;
MA.forEach(([c, ys]) => { g += poly(ys, c, 1.6); });
IND.forEach(([c, ys]) => { g += poly(ys, c, 1.4); });

// price-range markers
const note = (x, y, t) => `<text x="${x}" y="${y}" fill="#b8b8b8" font-size="18">${t}</text>`;
g += `<path d="M597 103 L600 100 L614 105 M597 100 V104" stroke="#aaa" stroke-width="1.3" fill="none"/>` + note(617, 112, '36.19');
g += `<rect x="1117" y="339" width="593" height="3" fill="#8c8c8c"/>` + note(1122, 334, '20.46 - 28.35');
g += `<rect x="1539" y="605" width="171" height="6" fill="#8c8c8c"/>` + note(1543, 598, '19.93 - 19.72');

// buy-signal balls
const ball = (x, y) => `<ellipse cx="${x}" cy="${y}" rx="10.5" ry="11" fill="url(#ballG)"/><path d="M${x - 6} ${y + 3} Q${x} ${y + 1} ${x + 6} ${y - 6} Q${x + 3} ${y + 5} ${x - 6} ${y + 3} Z" fill="#ffecec"/>`;
g = `<defs><radialGradient id="ballG" cx=".5" cy=".3" r=".7"><stop offset="0" stop-color="#ffc8c8"/><stop offset=".55" stop-color="#ee4040"/><stop offset="1" stop-color="#cc2a2a"/></radialGradient></defs>` + g;
[196, 571, 595, 1626].forEach(x => { g += ball(x, 1025); });

// 54.04 cursor value
g += `<rect x="1712" y="827" width="74" height="23" fill="#000090"/>` + line(1712, 827, 1786, 827, '#c01010', 1.5) + line(1712, 850, 1786, 850, '#c01010', 1.5);
g += `<text x="1713" y="845" fill="#c8c8e0" font-size="18">54.04</text>`;

// date axis
[312, 687, 1226].forEach(x => { g += line(x, 1282, x, 1305, '#c01010', 1.5); });
[407, 500, 594, 958, 1091].forEach(x => { g += line(x, 1282, x, 1287, '#c01010', 1.5); });
g += `<text x="10" y="1300" fill="#e02020" font-size="18">2022年</text>`;
g += `<text x="314" y="1300" fill="#e02020" font-size="18">2</text>`;
g += `<text x="690" y="1300" fill="#e02020" font-size="18">3</text>`;
g += `<text x="1228" y="1300" fill="#e02020" font-size="18">4</text>`;
g += `<rect x="783" y="1283" width="116" height="21" fill="#000088" stroke="#a00000" stroke-width="1.5"/>`;
g += `<text x="785" y="1300" fill="#c8c8c8" font-size="18">2022/03/07/一</text>`;
g += `<text x="1730" y="1300" fill="#c0c0c0" font-size="18">日线</text>`;

document.getElementById('chart').innerHTML = g;
```
